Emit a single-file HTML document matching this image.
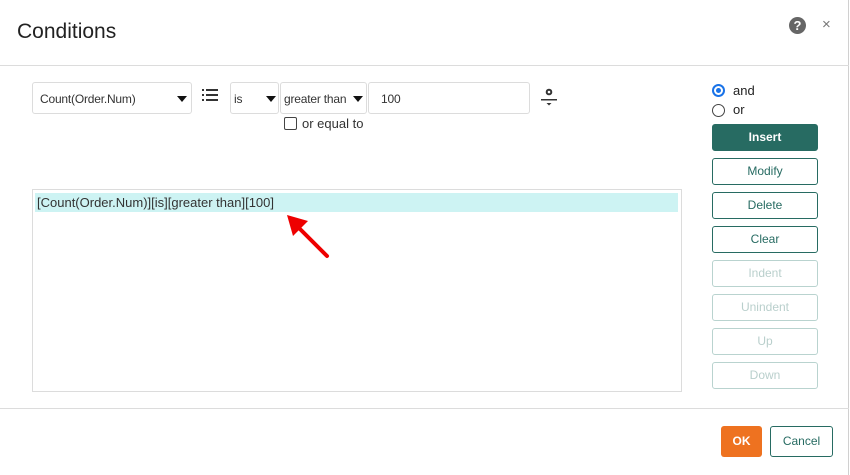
<!DOCTYPE html>
<html><head><style>
body{margin:0;width:850px;height:475px;background:#fff;font-family:"Liberation Sans",sans-serif;position:relative;overflow:hidden}
.a{position:absolute;box-sizing:border-box}
.box{border:1px solid #dcdcdc;border-radius:3px;font-size:12px;color:#333;letter-spacing:-0.2px}
.tri{position:absolute;width:0;height:0;border-left:5px solid transparent;border-right:5px solid transparent;border-top:6px solid #111}
.btn{position:absolute;left:712px;width:106px;height:27px;box-sizing:border-box;border:1px solid #276b62;border-radius:3px;font-size:12px;color:#276b62;text-align:center;line-height:25px;background:#fff}
.dis{border-color:#b9d3cf;color:#b9cfcc}
</style></head><body>
<div class="a" style="left:0;top:0;width:849px;height:475px;border-right:1px solid #d0d0d0"></div>
<div class="a" style="left:17px;top:20px;font-size:21px;color:#222">Conditions</div>
<div class="a" style="left:789px;top:17px;width:17px;height:17px;border-radius:50%;background:#666;color:#fff;font-size:13px;font-weight:bold;text-align:center;line-height:17px">?</div>
<div class="a" style="left:822px;top:16px;font-size:15px;color:#777">×</div>
<div class="a" style="left:0;top:65px;width:849px;height:1px;background:#dcdcdc"></div>
<div class="a" style="left:0;top:408px;width:849px;height:1px;background:#dcdcdc"></div>

<div class="a box" style="left:32px;top:82px;width:160px;height:32px;padding:9px 7px">Count(Order.Num)<div class="tri" style="left:144px;top:13px"></div></div>
<svg class="a" style="left:202px;top:88px" width="18" height="16"><g fill="#333"><rect x="0" y="1" width="2" height="2"/><rect x="0" y="6" width="2" height="2"/><rect x="0" y="11" width="2" height="2"/><rect x="4" y="1" width="12" height="2"/><rect x="4" y="6" width="12" height="2"/><rect x="4" y="11" width="12" height="2"/></g></svg>
<div class="a box" style="left:230px;top:82px;width:49px;height:32px;padding:9px 3px">is<div class="tri" style="left:35px;top:13px"></div></div>
<div class="a box" style="left:280px;top:82px;width:87px;height:32px;padding:9px 3px">greater than<div class="tri" style="left:72px;top:13px"></div></div>
<div class="a box" style="left:368px;top:82px;width:162px;height:32px;padding:9px 12px">100</div>
<svg class="a" style="left:540px;top:86px" width="18" height="22"><circle cx="9" cy="6" r="2.3" fill="none" stroke="#333" stroke-width="2"/><rect x="1" y="13" width="16" height="1.5" fill="#333"/><path d="M6.5 17h5l-2.5 2.5z" fill="#333"/></svg>
<div class="a" style="left:284px;top:117px;width:13px;height:13px;border:1px solid #444;border-radius:2px"></div>
<div class="a" style="left:302px;top:116px;font-size:13px;color:#333">or equal to</div>

<div class="a" style="left:32px;top:189px;width:650px;height:203px;border:1px solid #dcdcdc"></div>
<div class="a" style="left:35px;top:193px;width:643px;height:19px;background:#cdf3f3;font-size:13px;color:#333;padding:2px 2px">[Count(Order.Num)][is][greater than][100]</div>
<svg class="a" style="left:280px;top:208px" width="60" height="60"><line x1="47" y1="48" x2="14" y2="15" stroke="#e00" stroke-width="4" stroke-linecap="round"/><path d="M7 7 L28 13 L13 28 Z" fill="#e00"/></svg>

<div class="a" style="left:712px;top:84px;width:13px;height:13px;border:2px solid #1a73e8;border-radius:50%"><div class="a" style="left:2px;top:2px;width:5px;height:5px;border-radius:50%;background:#1a73e8"></div></div>
<div class="a" style="left:733px;top:83px;font-size:13px;color:#222">and</div>
<div class="a" style="left:712px;top:104px;width:13px;height:13px;border:1px solid #444;border-radius:50%"></div>
<div class="a" style="left:733px;top:102px;font-size:13px;color:#222">or</div>
<div class="btn" style="top:124px;background:#276b62;color:#fff;font-weight:bold">Insert</div>
<div class="btn" style="top:158px">Modify</div>
<div class="btn" style="top:192px">Delete</div>
<div class="btn" style="top:226px">Clear</div>
<div class="btn dis" style="top:260px">Indent</div>
<div class="btn dis" style="top:294px">Unindent</div>
<div class="btn dis" style="top:328px">Up</div>
<div class="btn dis" style="top:362px">Down</div>

<div class="a" style="left:721px;top:426px;width:41px;height:31px;background:#ee7220;border-radius:3px;color:#fff;font-size:12px;font-weight:bold;text-align:center;line-height:31px">OK</div>
<div class="a" style="left:770px;top:426px;width:63px;height:31px;border:1px solid #276b62;border-radius:3px;color:#276b62;font-size:12px;text-align:center;line-height:29px">Cancel</div>
</body></html>
